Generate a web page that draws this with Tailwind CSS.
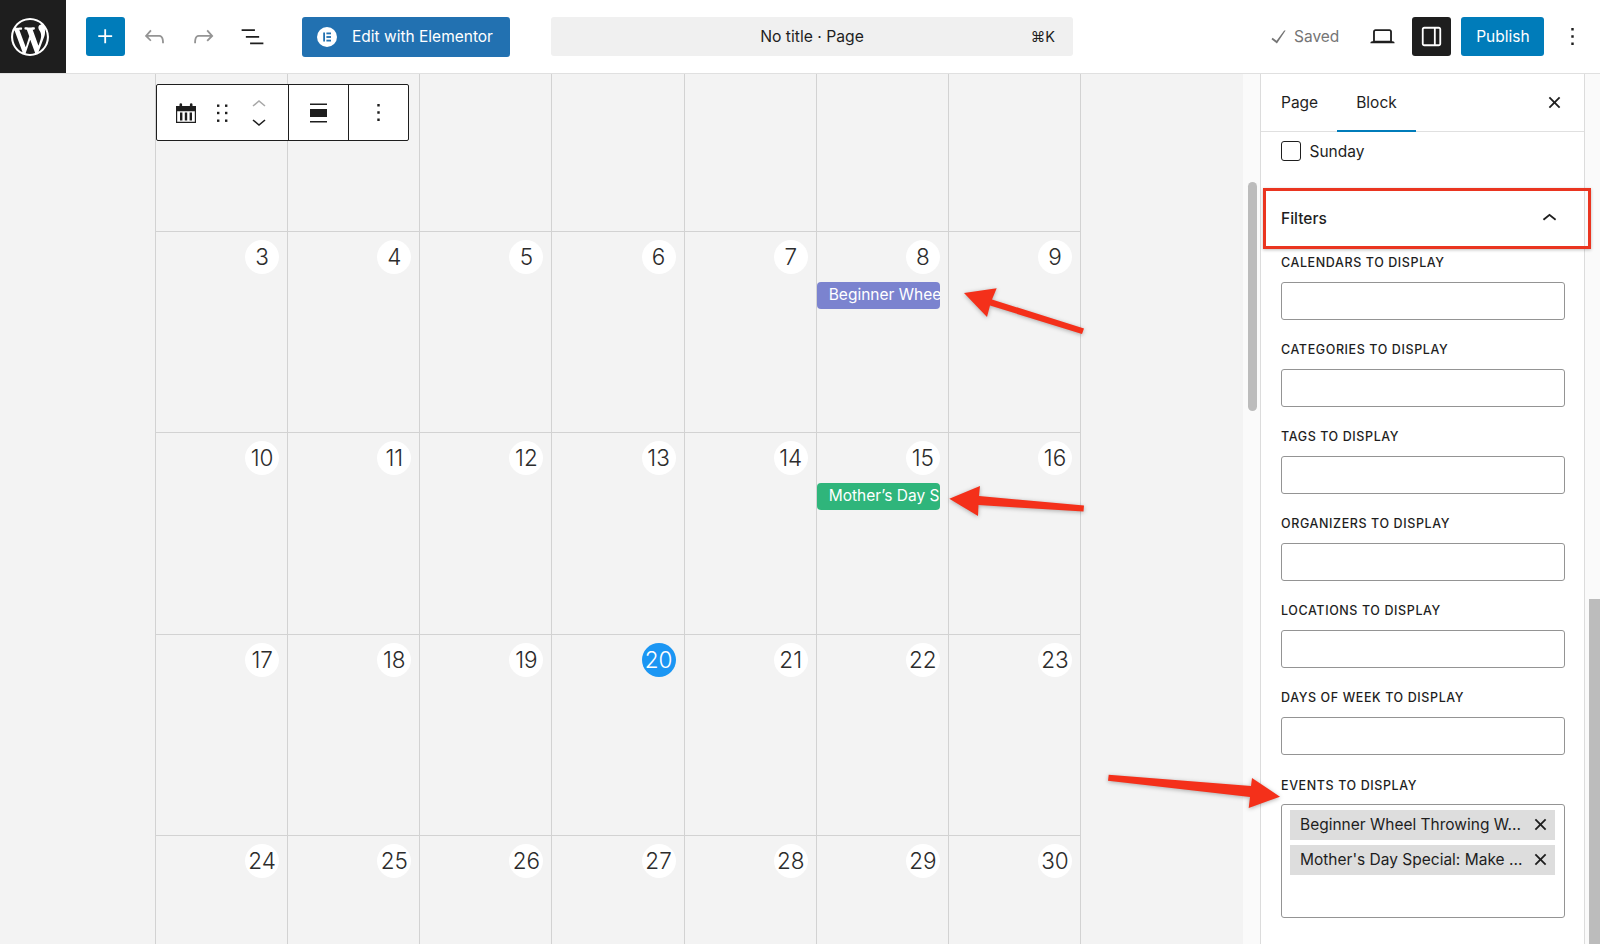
<!DOCTYPE html>
<html lang="en">
<head>
  <meta charset="UTF-8" />
  <meta name="viewport" content="width=device-width, initial-scale=1.0" />
  <title>No title · Page</title>
  <script src="https://cdn.jsdelivr.net/npm/@tailwindcss/browser@4"></script>
</head>
<body class="relative h-screen overflow-hidden flex flex-col bg-white text-[#1e1e1e] font-['Inter','Liberation_Sans',sans-serif]">

  <!-- top bar -->
  <header class="h-[74px] shrink-0 flex items-center bg-white border-b border-[#e0e0e0]">
    <div class="w-[66px] h-full bg-[#1e1e1e] flex items-center pl-[11px]">
      <svg class="w-[38px] h-[38px] fill-white" viewBox="0 0 20 20"><path d="M20 10c0-5.51-4.49-10-10-10C4.48 0 0 4.49 0 10c0 5.52 4.48 10 10 10 5.51 0 10-4.48 10-10zM7.78 15.37L4.37 6.22c.55-.02 1.17-.08 1.17-.08.5-.06.44-1.13-.06-1.11 0 0-1.45.11-2.37.11-.18 0-.37 0-.58-.01C4.12 2.69 6.87 1.11 10 1.11c2.33 0 4.45.87 6.05 2.34-.68-.11-1.65.39-1.65 1.58 0 .74.45 1.36.9 2.1.35.61.55 1.36.55 2.46 0 1.49-1.4 5-1.4 5l-3.03-8.37c.54-.02.82-.17.82-.17.5-.05.44-1.25-.06-1.22 0 0-1.44.12-2.38.12-.87 0-2.33-.12-2.33-.12-.5-.03-.56 1.2-.06 1.22l.92.08 1.26 3.41zM17.41 10c.24-.64.74-1.87.43-4.25.7 1.29 1.05 2.71 1.05 4.25 0 3.29-1.73 6.24-4.4 7.78.97-2.59 1.94-5.2 2.92-7.78zM6.1 18.09C3.12 16.65 1.11 13.53 1.11 10c0-1.3.23-2.48.72-3.59C3.25 10.3 4.67 14.2 6.1 18.09zm4.03-6.63l2.58 6.98c-.86.29-1.76.45-2.71.45-.79 0-1.57-.11-2.29-.33.81-2.38 1.62-4.74 2.42-7.1z"/></svg>
    </div>
    <button class="ml-[20px] w-[39px] h-[39px] rounded-[3px] bg-[#007cba] flex items-center justify-center">
      <svg class="w-[29px] h-[29px] fill-white" viewBox="0 0 24 24"><path d="M11 12.5V17.5H12.5V12.5H17.5V11H12.5V6H11V11H6V12.5H11Z"/></svg>
    </button>
    <div class="ml-[5px] w-[49px] flex justify-center">
      <svg class="w-[29px] h-[29px] fill-[#949494]" viewBox="0 0 24 24"><path d="M18.3 11.7c-.6-.6-1.4-.9-2.3-.9H6.7l2.9-3.3-1.1-1-4.5 5L8.5 16l1-1-2.7-2.7H16c.5 0 .9.2 1.3.5 1 1 1 3.4 1 4.5v.3h1.5v-.2c0-1.5 0-4.3-1.5-5.7z"/></svg>
    </div>
    <div class="w-[49px] flex justify-center">
      <svg class="w-[29px] h-[29px] fill-[#949494]" viewBox="0 0 24 24"><path d="M15.6 6.5l-1.1 1 2.9 3.3H8c-.9 0-1.7.3-2.3.9-1.4 1.5-1.4 4.2-1.4 5.6v.2h1.5v-.3c0-1.1 0-3.5 1-4.5.3-.3.7-.5 1.3-.5h9.2L14.5 15l1.1 1.1 4.6-4.6-4.6-5z"/></svg>
    </div>
    <div class="w-[49px] flex justify-center">
      <svg class="w-[29px] h-[29px] fill-[#1e1e1e]" viewBox="0 0 24 24"><path d="M3 6h11v1.5H3V6Zm3.5 5.5h11V13h-11v-1.5ZM21 17H10v1.5h11V17Z"/></svg>
    </div>
    <button class="ml-[25px] w-[208px] h-[40px] rounded-[3px] bg-[#2271b1] flex items-center pl-[15px] text-white text-[15.5px]">
      <svg class="w-[20px] h-[20px]" viewBox="0 0 20 20"><circle cx="10" cy="10" r="10" fill="#fff"/><rect x="6.2" y="5.5" width="1.8" height="9" fill="#2271b1"/><rect x="9.4" y="5.5" width="4.6" height="1.8" fill="#2271b1"/><rect x="9.4" y="9.1" width="4.6" height="1.8" fill="#2271b1"/><rect x="9.4" y="12.7" width="4.6" height="1.8" fill="#2271b1"/></svg>
      <span class="ml-[15px] pt-[1px]">Edit with Elementor</span>
    </button>
    <div class="ml-[41px] w-[522px] h-[39px] rounded-[3px] bg-[#f0f0f0] relative flex items-center justify-center text-[15.7px]">
      <span class="pt-[1px]">No title · Page</span>
      <span class="absolute right-[18px] text-[14.5px]">⌘K</span>
    </div>
    <svg class="ml-[191px] w-[29px] h-[29px] fill-[#757575]" viewBox="0 0 24 24"><path d="M16.7 7.1l-6.3 8.5-3.3-2.5-.9 1.2 4.5 3.4L17.9 7z"/></svg>
    <span class="ml-[1px] pt-[1px] text-[15.5px] text-[#757575]">Saved</span>
    <svg class="ml-[29px] w-[29px] h-[29px] fill-[#1e1e1e]" viewBox="0 0 24 24"><path d="M20.5 16h-.7V8c0-1.1-.9-2-2-2H6.2c-1.1 0-2 .9-2 2v8h-.7c-.8 0-1.5.7-1.5 1.5h20c0-.8-.7-1.5-1.5-1.5zM5.7 8c0-.3.2-.5.5-.5h11.6c.3 0 .5.2.5.5v7.6H5.7V8z"/></svg>
    <button class="ml-[15px] w-[39px] h-[39px] rounded-[3px] bg-[#1e1e1e] flex items-center justify-center">
      <svg class="w-[29px] h-[29px] fill-white" viewBox="0 0 24 24"><path d="M18 4H6c-1.1 0-2 .9-2 2v12c0 1.1.9 2 2 2h12c1.1 0 2-.9 2-2V6c0-1.1-.9-2-2-2zm-4 14.5H6c-.3 0-.5-.2-.5-.5V6c0-.3.2-.5.5-.5h8v13zm4.5-.5c0 .3-.2.5-.5.5h-2.5v-13H18c.3 0 .5.2.5.5v12z"/></svg>
    </button>
    <button class="ml-[10px] w-[83px] h-[39px] rounded-[3px] bg-[#007cba] text-white text-[15.5px] pt-[1px]">Publish</button>
    <svg class="ml-[14px] w-[29px] h-[29px] fill-[#1e1e1e]" viewBox="0 0 24 24"><path d="M13 19h-2v-2h2v2zm0-6h-2v-2h2v2zm0-6h-2V5h2v2z"/></svg>
  </header>

  <main class="flex-1 flex overflow-hidden">
    <!-- canvas with the calendar -->
    <div class="relative w-[1243px] shrink-0 bg-[#f3f3f3] overflow-hidden">
      <div class="ml-[155px] w-[926px] grid grid-cols-7 border-l border-[#d2d2d2] text-[22.5px] font-light text-[#2c2c2c]">
        <div class="h-[158px] border-r border-b border-[#d2d2d2]"></div>
        <div class="h-[158px] border-r border-b border-[#d2d2d2]"></div>
        <div class="h-[158px] border-r border-b border-[#d2d2d2]"></div>
        <div class="h-[158px] border-r border-b border-[#d2d2d2]"></div>
        <div class="h-[158px] border-r border-b border-[#d2d2d2]"></div>
        <div class="h-[158px] border-r border-b border-[#d2d2d2]"></div>
        <div class="h-[158px] border-r border-b border-[#d2d2d2]"></div>

        <div class="h-[201.3px] border-r border-b border-[#d2d2d2] pt-[8px] pr-[8px]"><div class="ml-auto w-[34px] h-[34px] rounded-full bg-white flex items-center justify-center">3</div></div>
        <div class="h-[201.3px] border-r border-b border-[#d2d2d2] pt-[8px] pr-[8px]"><div class="ml-auto w-[34px] h-[34px] rounded-full bg-white flex items-center justify-center">4</div></div>
        <div class="h-[201.3px] border-r border-b border-[#d2d2d2] pt-[8px] pr-[8px]"><div class="ml-auto w-[34px] h-[34px] rounded-full bg-white flex items-center justify-center">5</div></div>
        <div class="h-[201.3px] border-r border-b border-[#d2d2d2] pt-[8px] pr-[8px]"><div class="ml-auto w-[34px] h-[34px] rounded-full bg-white flex items-center justify-center">6</div></div>
        <div class="h-[201.3px] border-r border-b border-[#d2d2d2] pt-[8px] pr-[8px]"><div class="ml-auto w-[34px] h-[34px] rounded-full bg-white flex items-center justify-center">7</div></div>
        <div class="h-[201.3px] border-r border-b border-[#d2d2d2] pt-[8px]">
          <div class="ml-auto mr-[8px] w-[34px] h-[34px] rounded-full bg-white flex items-center justify-center">8</div>
          <div class="mt-[8px] w-[123.5px] h-[26.5px] rounded-[4px] bg-[#7b83cf] text-white text-[15.5px] font-normal leading-[26.5px] pl-[12px] overflow-hidden whitespace-nowrap">Beginner Wheel Throwing Workshop</div>
        </div>
        <div class="h-[201.3px] border-r border-b border-[#d2d2d2] pt-[8px] pr-[8px]"><div class="ml-auto w-[34px] h-[34px] rounded-full bg-white flex items-center justify-center">9</div></div>

        <div class="h-[201.3px] border-r border-b border-[#d2d2d2] pt-[8px] pr-[8px]"><div class="ml-auto w-[34px] h-[34px] rounded-full bg-white flex items-center justify-center">10</div></div>
        <div class="h-[201.3px] border-r border-b border-[#d2d2d2] pt-[8px] pr-[8px]"><div class="ml-auto w-[34px] h-[34px] rounded-full bg-white flex items-center justify-center">11</div></div>
        <div class="h-[201.3px] border-r border-b border-[#d2d2d2] pt-[8px] pr-[8px]"><div class="ml-auto w-[34px] h-[34px] rounded-full bg-white flex items-center justify-center">12</div></div>
        <div class="h-[201.3px] border-r border-b border-[#d2d2d2] pt-[8px] pr-[8px]"><div class="ml-auto w-[34px] h-[34px] rounded-full bg-white flex items-center justify-center">13</div></div>
        <div class="h-[201.3px] border-r border-b border-[#d2d2d2] pt-[8px] pr-[8px]"><div class="ml-auto w-[34px] h-[34px] rounded-full bg-white flex items-center justify-center">14</div></div>
        <div class="h-[201.3px] border-r border-b border-[#d2d2d2] pt-[8px]">
          <div class="ml-auto mr-[8px] w-[34px] h-[34px] rounded-full bg-white flex items-center justify-center">15</div>
          <div class="mt-[8px] w-[123.5px] h-[26.5px] rounded-[4px] bg-[#2fb57b] text-white text-[15.5px] font-normal leading-[26.5px] pl-[12px] overflow-hidden whitespace-nowrap">Mother’s Day Special</div>
        </div>
        <div class="h-[201.3px] border-r border-b border-[#d2d2d2] pt-[8px] pr-[8px]"><div class="ml-auto w-[34px] h-[34px] rounded-full bg-white flex items-center justify-center">16</div></div>

        <div class="h-[201.3px] border-r border-b border-[#d2d2d2] pt-[8px] pr-[8px]"><div class="ml-auto w-[34px] h-[34px] rounded-full bg-white flex items-center justify-center">17</div></div>
        <div class="h-[201.3px] border-r border-b border-[#d2d2d2] pt-[8px] pr-[8px]"><div class="ml-auto w-[34px] h-[34px] rounded-full bg-white flex items-center justify-center">18</div></div>
        <div class="h-[201.3px] border-r border-b border-[#d2d2d2] pt-[8px] pr-[8px]"><div class="ml-auto w-[34px] h-[34px] rounded-full bg-white flex items-center justify-center">19</div></div>
        <div class="h-[201.3px] border-r border-b border-[#d2d2d2] pt-[8px] pr-[8px]"><div class="ml-auto w-[34px] h-[34px] rounded-full bg-[#1b96f3] text-white flex items-center justify-center">20</div></div>
        <div class="h-[201.3px] border-r border-b border-[#d2d2d2] pt-[8px] pr-[8px]"><div class="ml-auto w-[34px] h-[34px] rounded-full bg-white flex items-center justify-center">21</div></div>
        <div class="h-[201.3px] border-r border-b border-[#d2d2d2] pt-[8px] pr-[8px]"><div class="ml-auto w-[34px] h-[34px] rounded-full bg-white flex items-center justify-center">22</div></div>
        <div class="h-[201.3px] border-r border-b border-[#d2d2d2] pt-[8px] pr-[8px]"><div class="ml-auto w-[34px] h-[34px] rounded-full bg-white flex items-center justify-center">23</div></div>

        <div class="h-[201.3px] border-r border-b border-[#d2d2d2] pt-[8px] pr-[8px]"><div class="ml-auto w-[34px] h-[34px] rounded-full bg-white flex items-center justify-center">24</div></div>
        <div class="h-[201.3px] border-r border-b border-[#d2d2d2] pt-[8px] pr-[8px]"><div class="ml-auto w-[34px] h-[34px] rounded-full bg-white flex items-center justify-center">25</div></div>
        <div class="h-[201.3px] border-r border-b border-[#d2d2d2] pt-[8px] pr-[8px]"><div class="ml-auto w-[34px] h-[34px] rounded-full bg-white flex items-center justify-center">26</div></div>
        <div class="h-[201.3px] border-r border-b border-[#d2d2d2] pt-[8px] pr-[8px]"><div class="ml-auto w-[34px] h-[34px] rounded-full bg-white flex items-center justify-center">27</div></div>
        <div class="h-[201.3px] border-r border-b border-[#d2d2d2] pt-[8px] pr-[8px]"><div class="ml-auto w-[34px] h-[34px] rounded-full bg-white flex items-center justify-center">28</div></div>
        <div class="h-[201.3px] border-r border-b border-[#d2d2d2] pt-[8px] pr-[8px]"><div class="ml-auto w-[34px] h-[34px] rounded-full bg-white flex items-center justify-center">29</div></div>
        <div class="h-[201.3px] border-r border-b border-[#d2d2d2] pt-[8px] pr-[8px]"><div class="ml-auto w-[34px] h-[34px] rounded-full bg-white flex items-center justify-center">30</div></div>
      </div>

      <!-- floating block toolbar -->
      <div class="absolute left-[156px] top-[10px] h-[57px] w-[253px] flex bg-white border border-[#1e1e1e] rounded-[2px]">
        <div class="w-[132px] flex items-center border-r border-[#1e1e1e]">
          <svg class="ml-[19px] w-[20px] h-[20px]" viewBox="0 0 20 20"><path fill="#1e1e1e" d="M0 3h3.5V1.5a1.3 1.3 0 0 1 2.6 0V3h7.8V1.5a1.3 1.3 0 0 1 2.6 0V3H20v4H0z"/><path fill="#1e1e1e" d="M0 7h20v13H0zm1.2 1.2v10.6h17.6V8.200z"/><rect x="4" y="9.500" width="2.400" height="8" fill="#1e1e1e"/><rect x="8.800" y="9.500" width="2.400" height="8" fill="#1e1e1e"/><rect x="13.600" y="9.500" width="2.400" height="8" fill="#1e1e1e"/></svg>
          <svg class="ml-[20px] w-[12px] h-[20px] fill-[#1e1e1e]" viewBox="0 0 12 20"><rect x="1" y="1.500" width="2.400" height="2.400"/><rect x="9" y="1.500" width="2.400" height="2.400"/><rect x="1" y="8.800" width="2.400" height="2.400"/><rect x="9" y="8.800" width="2.400" height="2.400"/><rect x="1" y="16.500" width="2.400" height="2.400"/><rect x="9" y="16.500" width="2.400" height="2.400"/></svg>
          <div class="ml-[24px] w-[14px] flex flex-col gap-[12px]">
            <svg class="w-[14px] h-[8px]" viewBox="0 0 14 8"><path d="M1 7l6-5 6 5" fill="none" stroke="#a8a8a8" stroke-width="1.600"/></svg>
            <svg class="w-[14px] h-[8px]" viewBox="0 0 14 8"><path d="M1 1l6 5 6-5" fill="none" stroke="#1e1e1e" stroke-width="1.600"/></svg>
          </div>
        </div>
        <div class="w-[60px] flex items-center justify-center border-r border-[#1e1e1e]">
          <svg class="w-[17px] h-[20px] fill-[#1e1e1e]" viewBox="0 0 17 20"><rect y="0.500" width="17" height="1.500"/><rect y="6" width="17" height="8"/><rect y="18" width="17" height="1.500"/></svg>
        </div>
        <div class="flex-1 flex items-center justify-center">
          <svg class="w-[29px] h-[29px] fill-[#1e1e1e]" viewBox="0 0 24 24"><path d="M13 19h-2v-2h2v2zm0-6h-2v-2h2v2zm0-6h-2V5h2v2z"/></svg>
        </div>
      </div>
    </div>

    <!-- canvas scrollbar -->
    <div class="w-[17px] shrink-0 bg-[#fafafa] pl-[5px]">
      <div class="mt-[108px] w-[9px] h-[229px] rounded-full bg-[#bcbcbc]"></div>
    </div>

    <!-- settings sidebar -->
    <aside class="w-[325px] shrink-0 bg-white border-x border-[#dcdcdc] overflow-hidden">
      <div class="h-[58px] flex border-b border-[#e0e0e0] text-[15.5px]">
        <div class="pl-[20px] w-[76px] flex items-center">Page</div>
        <div class="w-[79px] flex items-center justify-center border-b-2 border-[#007cba] -mb-px pt-[2px]">Block</div>
        <svg class="ml-auto mr-[15px] self-center w-[29px] h-[29px] fill-[#1e1e1e]" viewBox="0 0 24 24"><path d="M12 13.06l3.712 3.713 1.061-1.06L13.061 12l3.712-3.712-1.06-1.06L12 10.938 8.288 7.227l-1.061 1.06L10.939 12l-3.712 3.712 1.06 1.061L12 13.061z"/></svg>
      </div>
      <div class="px-[20px] pt-[9px]">
        <div class="flex items-center h-[20px] text-[15.5px]">
          <div class="w-[19.5px] h-[19.5px] rounded-[3px] border border-[#1e1e1e]"></div>
          <span class="ml-[9px] pt-[1px]">Sunday</span>
        </div>
        <div class="mt-[38px] h-[40px] flex items-center justify-between text-[15.5px] font-medium">
          <span>Filters</span>
          <svg class="-mt-[2px] w-[29px] h-[29px] fill-[#1e1e1e]" viewBox="0 0 24 24"><path d="M6.500 12.400L12 8l5.500 4.400-.9 1.200L12 10l-4.500 3.600-1-1.200z"/></svg>
        </div>
        <div class="mt-[16px] h-[87.1px]">
          <div class="h-[16px] leading-[16px] text-[12.5px] tracking-[0.6px] font-medium uppercase">Calendars to display</div>
          <div class="mt-[11px] w-[284px] h-[38px] rounded-[3px] border border-[#949494]"></div>
        </div>
        <div class="h-[87.1px]">
          <div class="h-[16px] leading-[16px] text-[12.5px] tracking-[0.6px] font-medium uppercase">Categories to display</div>
          <div class="mt-[11px] w-[284px] h-[38px] rounded-[3px] border border-[#949494]"></div>
        </div>
        <div class="h-[87.1px]">
          <div class="h-[16px] leading-[16px] text-[12.5px] tracking-[0.6px] font-medium uppercase">Tags to display</div>
          <div class="mt-[11px] w-[284px] h-[38px] rounded-[3px] border border-[#949494]"></div>
        </div>
        <div class="h-[87.1px]">
          <div class="h-[16px] leading-[16px] text-[12.5px] tracking-[0.6px] font-medium uppercase">Organizers to display</div>
          <div class="mt-[11px] w-[284px] h-[38px] rounded-[3px] border border-[#949494]"></div>
        </div>
        <div class="h-[87.1px]">
          <div class="h-[16px] leading-[16px] text-[12.5px] tracking-[0.6px] font-medium uppercase">Locations to display</div>
          <div class="mt-[11px] w-[284px] h-[38px] rounded-[3px] border border-[#949494]"></div>
        </div>
        <div class="h-[87.1px]">
          <div class="h-[16px] leading-[16px] text-[12.5px] tracking-[0.6px] font-medium uppercase">Days of week to display</div>
          <div class="mt-[11px] w-[284px] h-[38px] rounded-[3px] border border-[#949494]"></div>
        </div>
        <div>
          <div class="h-[16px] leading-[16px] text-[12.5px] tracking-[0.6px] font-medium uppercase">Events to display</div>
          <div class="mt-[10px] w-[284px] h-[114px] rounded-[3px] border border-[#949494] pt-[5px] pl-[8px] flex flex-col gap-[5px]">
            <div class="w-[265px] h-[30px] bg-[#dddddd] flex items-center justify-between pl-[10px] text-[15.5px]">
              <span class="pt-[1px]">Beginner Wheel Throwing W...</span>
              <svg class="w-[29px] h-[29px] fill-[#1e1e1e]" viewBox="0 0 24 24"><path d="M12 13.06l3.712 3.713 1.061-1.06L13.061 12l3.712-3.712-1.06-1.06L12 10.938 8.288 7.227l-1.061 1.06L10.939 12l-3.712 3.712 1.06 1.061L12 13.061z"/></svg>
            </div>
            <div class="w-[265px] h-[30px] bg-[#dddddd] flex items-center justify-between pl-[10px] text-[15.5px]">
              <span class="pt-[1px]">Mother's Day Special: Make ...</span>
              <svg class="w-[29px] h-[29px] fill-[#1e1e1e]" viewBox="0 0 24 24"><path d="M12 13.06l3.712 3.713 1.061-1.06L13.061 12l3.712-3.712-1.06-1.06L12 10.938 8.288 7.227l-1.061 1.06L10.939 12l-3.712 3.712 1.06 1.061L12 13.061z"/></svg>
            </div>
          </div>
        </div>
      </div>
    </aside>

    <!-- sidebar scrollbar -->
    <div class="flex-1 bg-[#fafafa] pl-[4px]">
      <div class="mt-[525px] h-[345px] bg-[#bcbcbc]"></div>
    </div>
  </main>

  <!-- screenshot annotations -->
  <div class="absolute left-[1263px] top-[188px] w-[328px] h-[61px] border-[3px] border-[#ea3520] shadow-[0_1px_3px_rgba(0,0,0,0.25)]"></div>
  <svg class="absolute left-0 top-0 w-[1600px] h-[944px] pointer-events-none drop-shadow-[0_1px_2px_rgba(0,0,0,0.3)]" viewBox="0 0 1600 944">
    <polygon fill="#f4301a" points="964,293 996.7,288.3 992,299.5 1084,328.500 1082,334 990,305.500 987,317"/>
    <polygon fill="#f4301a" points="949.3,498.7 980,486 979,496 1084,505.500 1083.500,511.500 978.500,505 978,516"/>
    <polygon fill="#f4301a" points="1280,796.7 1252,778 1251,786 1108.700,774.700 1108,780.700 1250,797 1248.700,808"/>
  </svg>
</body>
</html>
